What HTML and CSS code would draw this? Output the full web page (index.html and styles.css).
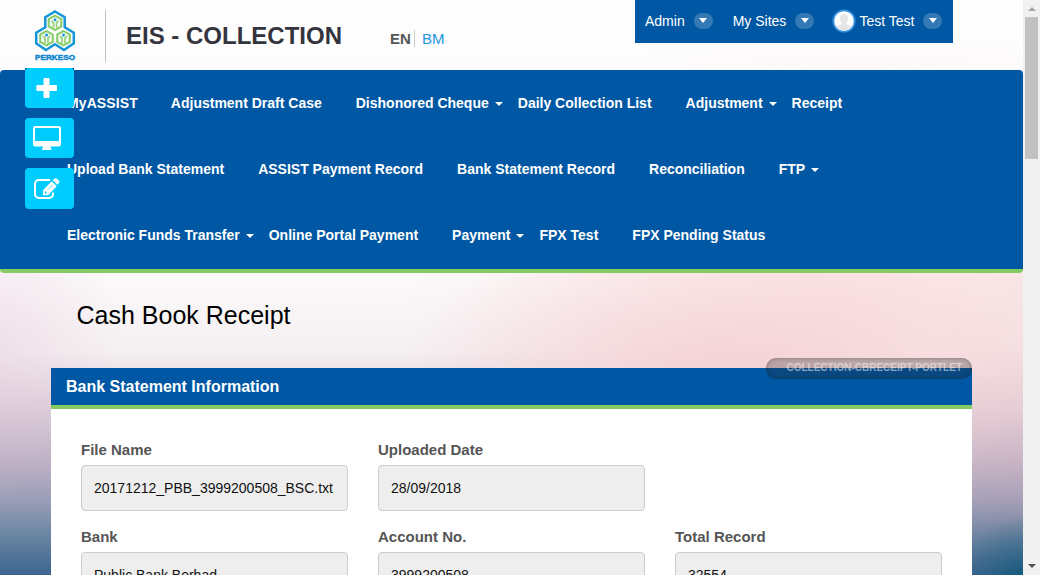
FILE: index.html
```
<!DOCTYPE html>
<html lang="en">
<head>
<meta charset="utf-8">
<title>Cash Book Receipt</title>
<link rel="stylesheet" href="styles.css">
</head>
<body>
<div class="page">
  <header class="header">
    <svg class="logo" viewBox="0 0 44 52" width="44" height="52">
      <defs>
        <g id="cell">
          <path d="M0-7.200 6.300-3.600V3.600L0 7.200-6.300 3.600V-3.600Z" fill="#f6fbf4" stroke="#86cc66" stroke-width="2"/>
          <path d="M-3.600-2-1.500 0V5M3.600-2 1.500 0V5" fill="none" stroke="#8fd071" stroke-width="1.600"/>
          <circle cy="-3.100" r="1.500" fill="#1b95d5"/>
        </g>
      </defs>
      <path d="M22 1.500 31.700 7.100V17.400L40.800 22.700V33.400L31 40 22 34.300 13 40 3.200 33.400V22.700L12.300 17.400V7.100Z" fill="#fff" stroke="#1496d8" stroke-width="2.500"/>
      <use href="#cell" x="22" y="12.800"/>
      <use href="#cell" x="13.500" y="28.200"/>
      <use href="#cell" x="30.500" y="28.200"/>
      <text x="2" y="50" class="logo-text" textLength="40" lengthAdjust="spacingAndGlyphs">PERKESO</text>
    </svg>
    <div class="rule"></div>
    <h1 class="site-name">EIS - COLLECTION</h1>
    <div class="langs"><span class="lang-on">EN</span><a class="lang">BM</a></div>
    <div class="userbar">
      <span>Admin</span><i class="drop"></i>
      <span class="sites">My Sites</span><i class="drop"></i>
      <svg class="avatar" width="24" height="24" viewBox="0 0 24 24"><circle cx="12" cy="12" r="10.700" fill="#fff" stroke="#3492df" stroke-width="1.800"/><path d="M12 5c3 0 4.300 2 4 5-.2 2-1 3-1.500 4.200 0 2 4 1.800 5 4.200-2 2.200-4.500 3.300-7.500 3.300S6.500 20.600 4.500 18.400c1-2.400 5-2.200 5-4.200C9 13 8.200 12 8 10c-.3-3 1-5 4-5Z" fill="#e6e6e6"/></svg>
      <span class="who">Test Test</span><i class="drop"></i>
    </div>
  </header>

  <nav class="nav">
    <div class="row"><a class="wide">MyASSIST</a><a>Adjustment Draft Case</a><a class="has-menu">Dishonored Cheque</a><a>Daily Collection List</a><a class="has-menu">Adjustment</a><a>Receipt</a></div>
    <div class="row"><a>Upload Bank Statement</a><a>ASSIST Payment Record</a><a>Bank Statement Record</a><a>Reconciliation</a><a class="has-menu">FTP</a></div>
    <div class="row"><a class="has-menu">Electronic Funds Transfer</a><a>Online Portal Payment</a><a class="has-menu">Payment</a><a>FPX Test</a><a>FPX Pending Status</a></div>
  </nav>

  <h2 class="page-title">Cash Book Receipt</h2>

  <section class="panel">
    <div class="portlet-tag">COLLECTION-CBRECEIPT-PORTLET</div>
    <h3 class="panel-head">Bank Statement Information</h3>
    <div class="form">
      <div class="field"><label>File Name</label><div class="input">20171212_PBB_3999200508_BSC.txt</div></div>
      <div class="field"><label>Uploaded Date</label><div class="input">28/09/2018</div></div>
      <div></div>
      <div class="field"><label>Bank</label><div class="input">Public Bank Berhad</div></div>
      <div class="field"><label>Account No.</label><div class="input">3999200508</div></div>
      <div class="field"><label>Total Record</label><div class="input">32554</div></div>
    </div>
  </section>

  <aside class="tools">
    <div class="tool first"><svg width="49" height="40" viewBox="0 0 49 40"><path d="M19.500 10h4a1 1 0 0 1 1 1v6h6.500a1 1 0 0 1 1 1v4a1 1 0 0 1-1 1h-6.500v6a1 1 0 0 1-1 1h-4a1 1 0 0 1-1-1v-6H12.300a1 1 0 0 1-1-1v-4a1 1 0 0 1 1-1h6.200v-6a1 1 0 0 1 1-1Z" fill="#fff"/></svg></div>
    <div class="tool"><svg width="49" height="40" viewBox="0 0 49 40"><path fill="#fff" fill-rule="evenodd" d="M10.300 8h23.400a2.300 2.300 0 0 1 2.300 2.300v15.900a2.300 2.300 0 0 1-2.300 2.300H25.500c0 1.500 1 1.700 1 2.400 0 .7-.4 1.100-1 1.100h-7.500c-.6 0-1-.4-1-1.100 0-.7 1-.9 1-2.400H10.300A2.300 2.300 0 0 1 8 26.200V10.300A2.300 2.300 0 0 1 10.300 8Zm.3 2a.6.600 0 0 0-.6.600V23h24V10.600a.6.600 0 0 0-.6-.6Z"/></svg></div>
    <div class="tool last"><svg width="49" height="41" viewBox="0 0 49 41"><path d="M25 12H14a4 4 0 0 0-4 4v10a4 4 0 0 0 4 4h10a4 4 0 0 0 4-4V24.500" fill="none" stroke="#fff" stroke-width="2"/><path d="M26.700 13.300 31.700 18.300 23 27.300H18V22.300ZM27.700 12.300 29.500 10.700c.8-.7 1.700-.7 2.400 0l2 2c.7.700.7 1.600 0 2.300l-1.500 1.800Z" fill="#fff"/><path d="M19.600 23.500 21.600 25.600" stroke="#00cdfd" stroke-width="1.200"/><path d="M23 21.500 27.500 17" stroke="#00cdfd" stroke-width=".7"/></svg></div>
  </aside>
</div>
<div class="scrollbar"><i class="arrow-up"></i><i class="thumb"></i><i class="arrow-down"></i></div>
</body>
</html>
```
FILE: styles.css
```
* { box-sizing: border-box; }
body {
  margin: 0;
  height: 575px;
  display: flex;
  overflow: hidden;
  font: 14px/20px "Liberation Sans", Arial, sans-serif;
  color: #111;
}
h1, h2, h3 { margin: 0; }
.page {
  position: relative;
  width: 1023px;
  height: 575px;
  overflow: hidden;
  background:
    radial-gradient(ellipse 90px 75px at 1035px 590px, rgba(0, 85, 119, 1), rgba(0, 85, 119, .45) 50%, rgba(0, 85, 119, 0)),
    radial-gradient(ellipse 330px 140px at 730px 370px, rgba(244, 205, 210, .8), rgba(246, 210, 214, 0)),
    radial-gradient(ellipse 460px 260px at 860px 280px, rgba(252, 218, 215, .6) 10%, rgba(250, 220, 218, 0)),
    linear-gradient(90deg, rgba(218, 130, 150, 0) 900px, rgba(210, 140, 160, .11) 1010px) 0 273px no-repeat,
    radial-gradient(ellipse 120px 160px at 0 340px, rgba(226, 186, 210, .3), rgba(226, 186, 210, 0)),
    linear-gradient(#fefefe 0, #fdfcfd 90px, #fcfafb 273px, #f5f0f2 350px, #dfd1dc 405px, #beb2c6 460px, #9b9db7 500px, #6a86a3 535px, #3d648f 575px);
}
.header { display: flex; height: 70px; align-items: flex-start; }
.logo { margin: 10px 0 0 33px; }
.logo-text { font: bold 8px "Liberation Sans", Arial, sans-serif; fill: #1189d0; stroke: #1189d0; stroke-width: .5px; }
.rule { width: 1px; height: 52px; margin: 10px 0 0 28px; background: #c3c3c6; }
.site-name { width: 219px; margin: 21px 0 0 20px; font-size: 24px; line-height: 30px; color: #33343d; white-space: nowrap; }
.langs { display: flex; margin: 30px 0 0 44px; width: 80px; font-size: 15px; line-height: 17px; }
.lang-on { width: 26px; padding-left: 1px; border-right: 1px solid #ccc; color: #555; font-weight: bold; }
.lang { margin-left: 7px; color: #2096df; }
.userbar {
  display: flex; align-items: center;
  width: 318px; height: 43px; margin-left: 166px; padding: 0 0 2px 10px;
  background: #0057a3; color: #fff; white-space: nowrap;
}
.drop {
  display: flex; align-items: center; justify-content: center;
  width: 19px; height: 16px; margin-left: 9px; border-radius: 9px; background: #3379b5;
}
.drop::before { content: ""; border: 4.5px solid transparent; border-top: 5px solid #fff; border-bottom: 0; }
.sites { margin-left: 20px; }
.avatar { margin-left: 18px; }
.who { margin-left: 3px; }
.nav { height: 203px; background: #0057a3; border-bottom: 4px solid #86cb62; border-radius: 4px; }
.row { display: flex; height: 66px; padding-left: 67px; align-items: center; color: #fff; font-weight: bold; white-space: nowrap; }
.row a { margin-right: 34px; }
.row .wide { margin-right: 33px; letter-spacing: .1px; }
.row .has-menu { display: flex; align-items: center; margin-right: 15px; }
.has-menu::after { content: ""; margin: 2px 0 0 6px; border: 4px solid transparent; border-top-color: #fff; border-bottom: 0; }
.page-title { margin: 27px 0 0 76.5px; font-size: 25px; line-height: 30px; font-weight: normal; color: #000; }
.panel { position: relative; width: 921px; height: 300px; margin: 38px 0 0 51px; background: #fff; }
.panel-head { height: 41px; padding-left: 15px; background: #0057a3; border-bottom: 4px solid #86cb62; color: #fff; font-size: 16px; line-height: 37px; }
.portlet-tag {
  position: absolute; right: 0; top: -10px; width: 206px; height: 21px; padding-right: 10px;
  border-radius: 10px; background: rgba(34, 34, 34, .27); box-shadow: inset 0 0 4px rgba(34, 34, 34, .4);
  color: rgba(255, 255, 255, .5); font-size: 10px; font-weight: bold; line-height: 19px; text-align: right; white-space: nowrap;
}
.form { display: grid; grid-template-columns: repeat(3, 267px); column-gap: 30px; grid-auto-rows: 87px; padding: 31px 30px 0; }
label { display: block; height: 25px; line-height: 20px; font-size: 15px; font-weight: bold; color: #555; }
.input { height: 46px; padding: 0 12px; border: 1px solid #ccc; border-radius: 4px; background: #eee; line-height: 44px; }
.tools { position: absolute; left: 25px; top: 68px; width: 49px; display: flex; flex-direction: column; gap: 10px; background: linear-gradient(#0057a3 4px, transparent 4px); }
.tool { height: 40px; border-radius: 4px; background: #00cdfd; }
.tool.last { height: 41px; }
.tool svg { display: block; }
.scrollbar { display: flex; flex-direction: column; align-items: center; width: 17px; height: 575px; background: #f1f1f1; }
.arrow-up { margin-top: 7px; border: 4px solid transparent; border-bottom-color: #a3a3a3; border-top: 0; }
.thumb { width: 13px; height: 142px; margin-top: 6px; background: #c1c1c1; }
.arrow-down { margin-top: 405px; border: 4px solid transparent; border-top-color: #505050; border-bottom: 0; }
```
